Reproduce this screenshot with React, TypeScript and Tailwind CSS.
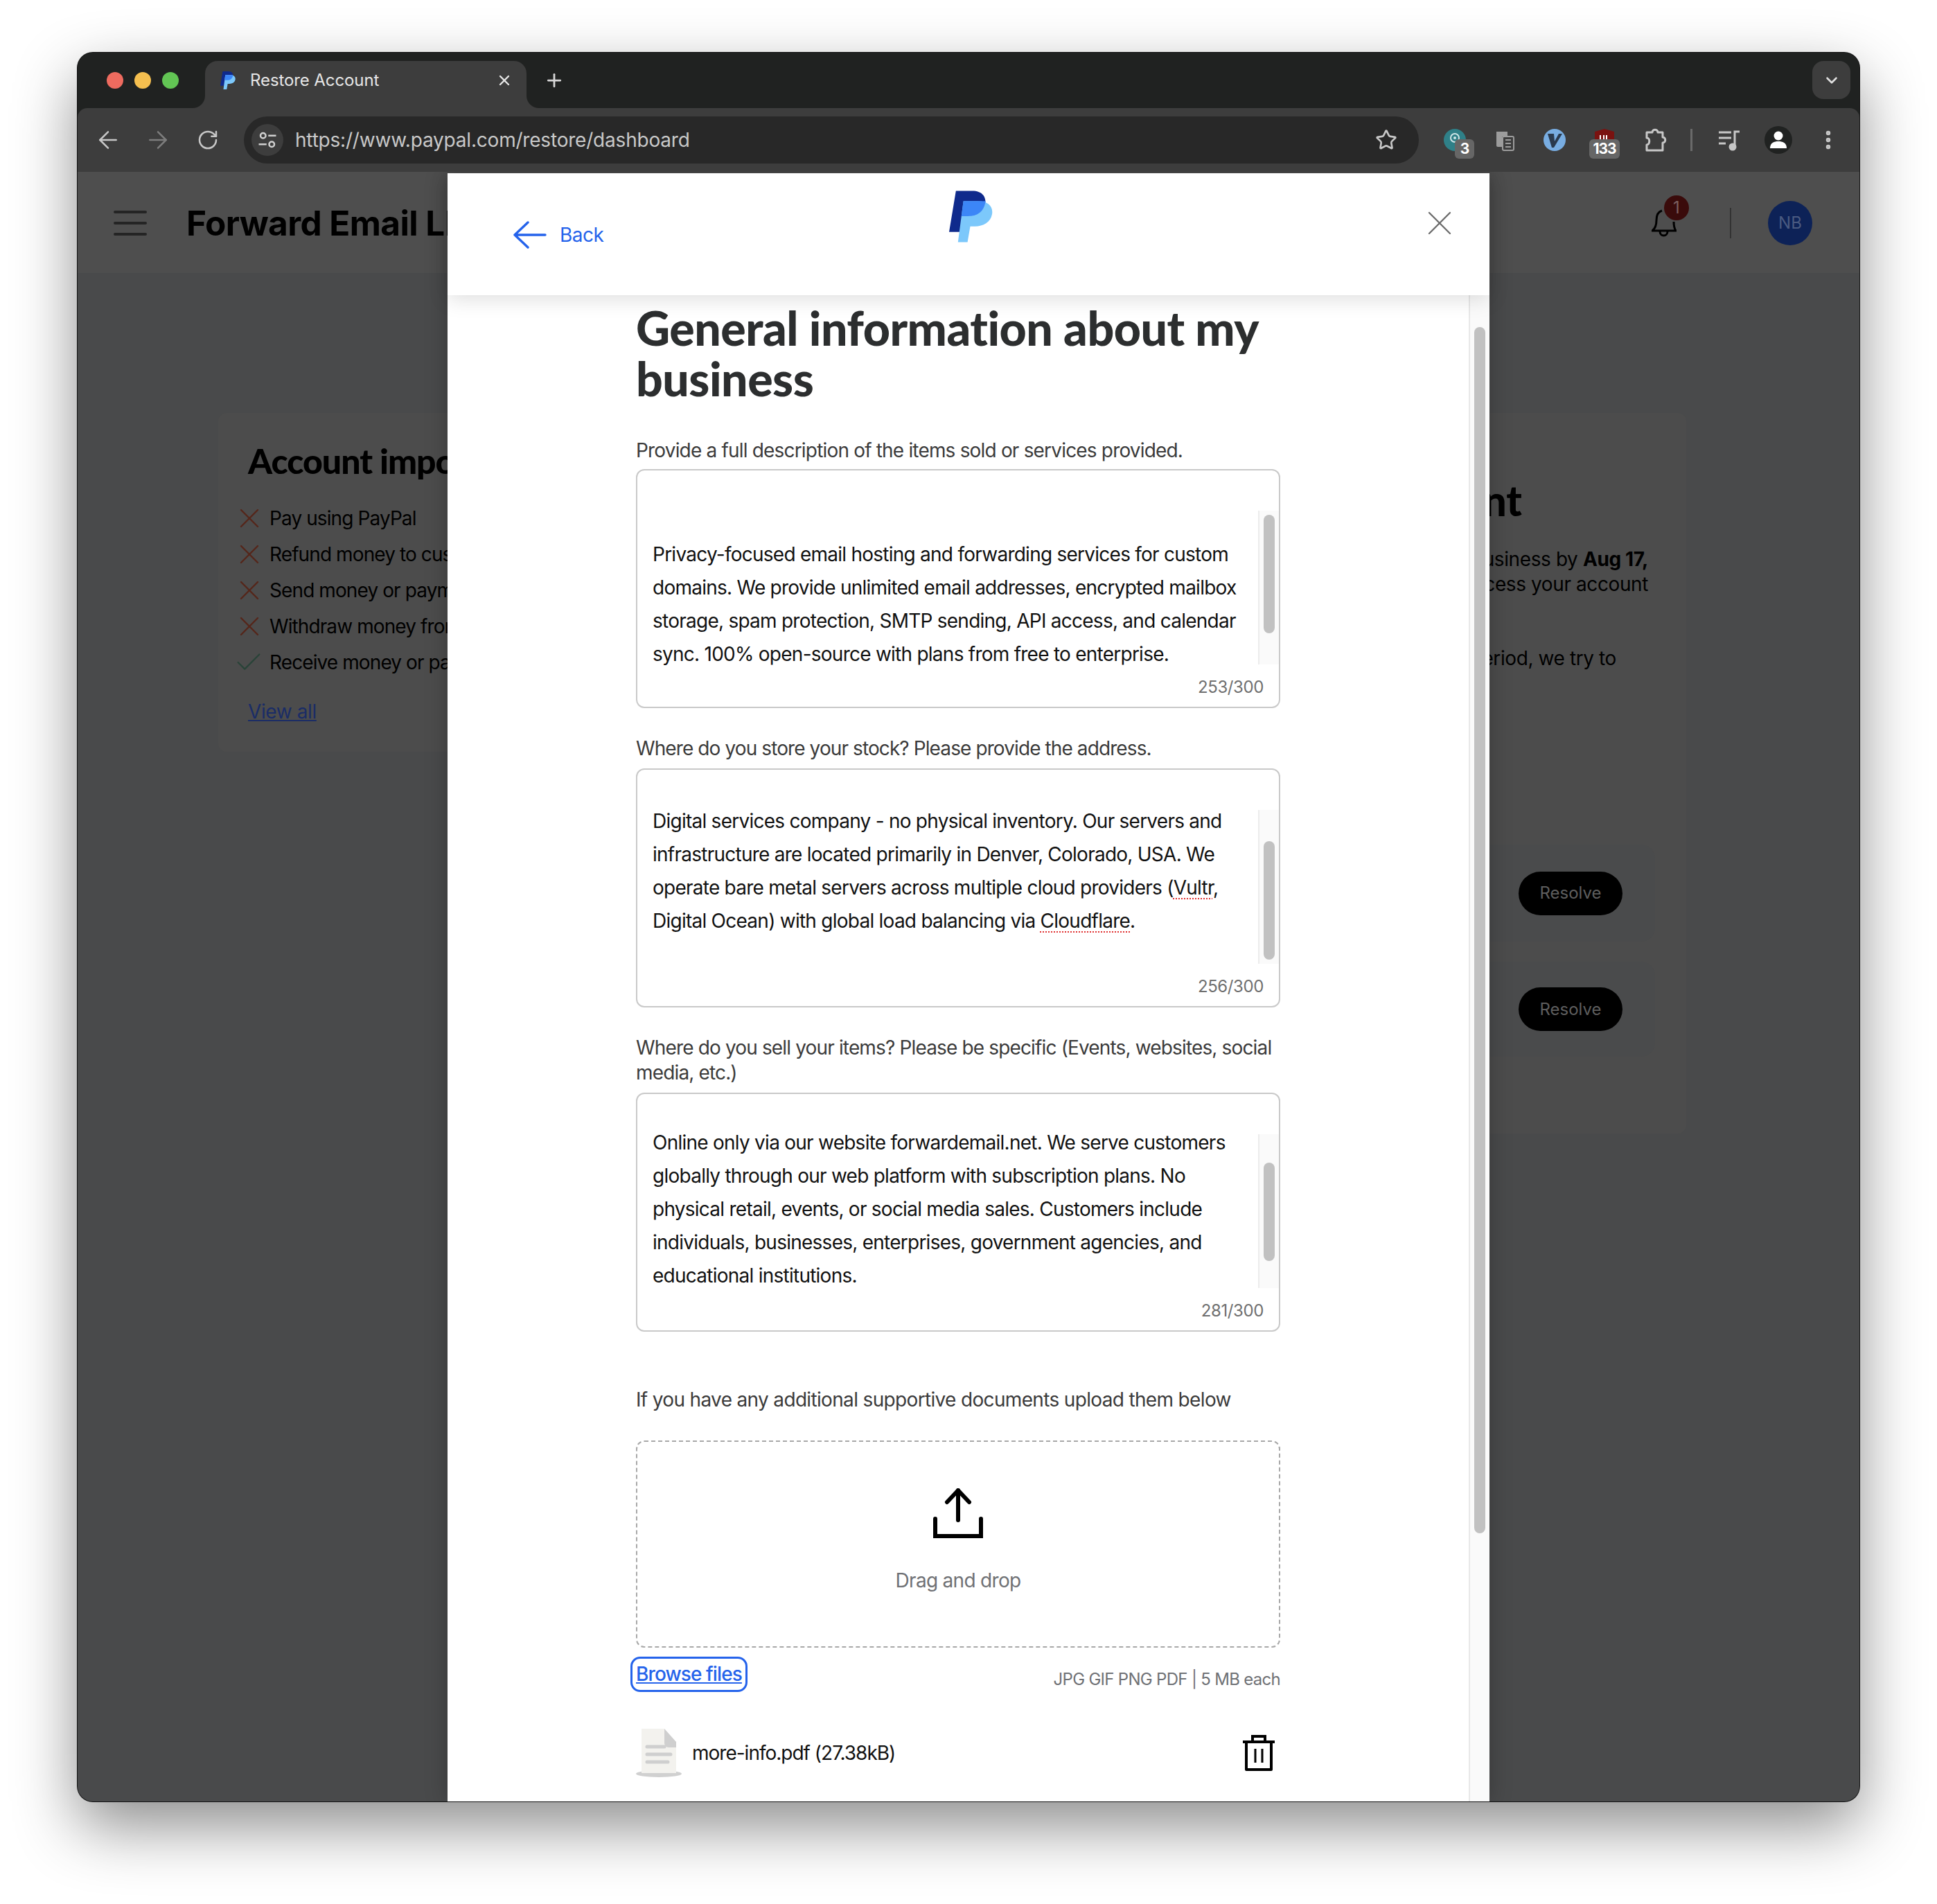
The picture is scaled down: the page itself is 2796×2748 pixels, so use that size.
import React from 'react';
import { ArrowLeft, ArrowRight, ChevronDown, Plus, RotateCw, Star, X, Check, EllipsisVertical } from 'lucide-react';

function PayPalMark({ className }: { className?: string }) {
  return (
    <svg viewBox="0 0 64 75" className={className}>
      <path d="M10 0H34C48 0 55 8 53 20C51 32 40 37 28 37H20L16 60H0Z" fill="#0f2a8c" />
      <path d="M21 15H42C56 15 65 22 63 34C61 46 50 52 38 52H31L27 75H13Z" fill="#7cc8fb" />
      <path d="M21 15H53.5C51 32 40 37 28 37H18Z" fill="#3c86f7" />
    </svg>
  );
}

function Shortcut({ className, children }: { className: string; children: React.ReactNode }) {
  return <div className={`flex items-center justify-center relative ${className}`}>{children}</div>;
}

function ExtBadge({ className, label }: { className: string; label: string }) {
  return (
    <span className={`absolute h-[28px] rounded-[6px] bg-[#666666] text-white text-[21px] tracking-[-1px] leading-[28px] font-bold text-center ${className}`}>
      {label}
    </span>
  );
}

function BrowserChrome() {
  return (
    <>
      {/* tab strip */}
      <div className="h-[80px] bg-[#202221] flex pt-[12px] shrink-0">
        <div className="w-[184px] flex items-center gap-[16px] pl-[42px] pb-[12px] shrink-0">
          <span className="w-[24px] h-[24px] rounded-full bg-[#ee6b5f]" />
          <span className="w-[24px] h-[24px] rounded-full bg-[#f5bf4f]" />
          <span className="w-[24px] h-[24px] rounded-full bg-[#62c554]" />
        </div>
        <div className="relative w-[464px] h-[68px] bg-[#3d3d3d] rounded-t-[18px] flex items-center pl-[22px] pr-[20px] pb-[12px] shrink-0">
          <span className="absolute -left-[18px] bottom-0 w-[18px] h-[18px] bg-[#3d3d3d]">
            <span className="block w-full h-full bg-[#202221] rounded-br-[18px]" />
          </span>
          <span className="absolute -right-[18px] bottom-0 w-[18px] h-[18px] bg-[#3d3d3d]">
            <span className="block w-full h-full bg-[#202221] rounded-bl-[18px]" />
          </span>
          <PayPalMark className="w-[22px] h-[26px]" />
          <span className="ml-[21px] text-[24px] tracking-[-0.1px] text-[#e6e6e6] flex-1">Restore Account</span>
          <X className="w-[24px] h-[24px] text-[#e6e6e6]" strokeWidth={2.4} />
        </div>
        <div className="w-[80px] flex items-center justify-center pb-[12px] shrink-0">
          <Plus className="w-[30px] h-[30px] text-[#d8d8d8]" strokeWidth={2.2} />
        </div>
        <div className="flex-1 flex justify-end pr-[13px]">
          <div className="w-[55px] h-[55px] rounded-[16px] bg-[#3d3d3d] flex items-center justify-center">
            <ChevronDown className="w-[26px] h-[26px] text-[#e0e0e0]" strokeWidth={2.4} />
          </div>
        </div>
      </div>

      {/* toolbar */}
      <div className="h-[92px] bg-[#3d3d3d] rounded-t-[14px] flex items-center shrink-0 text-[#c7c7c7]">
        <div className="w-[240px] flex items-center pl-[24px] gap-[32px] shrink-0">
          <ArrowLeft className="w-[40px] h-[40px]" strokeWidth={1.5} />
          <ArrowRight className="w-[40px] h-[40px] text-[#7d7d7d]" strokeWidth={1.5} />
          <RotateCw className="w-[32px] h-[32px] ml-[4px]" strokeWidth={1.9} />
        </div>
        <div className="w-[1696px] h-[68px] rounded-full bg-[#282828] flex items-center pl-[11px] pr-[31px] shrink-0">
          <div className="w-[46px] h-[46px] rounded-full bg-[#3d3d3d] flex items-center justify-center shrink-0">
            <svg viewBox="0 0 24 24" className="w-[30px] h-[30px]" fill="none" stroke="#d0d0d0" strokeWidth="2">
              <circle cx="7" cy="7" r="3" />
              <path d="M13 7H22M2 17H11" />
              <circle cx="17" cy="17" r="3" />
            </svg>
          </div>
          <span className="ml-[17px] text-[28px] tracking-[-0.2px] text-[#c8c8c8] flex-1">
            https://www.paypal.com/restore/dashboard
          </span>
          <Star className="w-[32px] h-[32px]" strokeWidth={2} />
        </div>
        <div className="flex items-center ml-[36px] gap-[40px] shrink-0">
          <Shortcut className="w-[32px] h-[32px]">
            <svg viewBox="0 0 32 32" className="w-[32px] h-[32px]">
              <circle cx="16" cy="16" r="16" fill="#2f8088" />
              <circle cx="16" cy="13" r="6" fill="none" stroke="#cfe6e8" strokeWidth="2" />
              <circle cx="16" cy="13" r="2" fill="#cfe6e8" />
            </svg>
            <ExtBadge className="left-[16px] top-[15px] w-[28px]" label="3" />
          </Shortcut>
          <Shortcut className="w-[32px] h-[32px]">
            <svg viewBox="0 0 32 32" className="w-[32px] h-[32px]" fill="none">
              <path d="M4 4h16v7H12v15H6a2 2 0 0 1-2-2Z" fill="#9c9c9c" />
              <rect x="13" y="11" width="16" height="20" rx="2" stroke="#9c9c9c" strokeWidth="2" />
              <path d="M17 16h8M17 21h8M17 26h8" stroke="#9c9c9c" strokeWidth="2" />
            </svg>
          </Shortcut>
          <Shortcut className="w-[32px] h-[32px]">
            <svg viewBox="0 0 32 32" className="w-[32px] h-[32px]">
              <circle cx="16" cy="16" r="16" fill="#78ade2" />
              <path d="M6 7H15L16 18L22 7H27L15 27H12Z" fill="#2a3a4e" />
            </svg>
          </Shortcut>
          <Shortcut className="w-[32px] h-[32px]">
            <svg viewBox="0 0 32 32" className="w-[32px] h-[32px]">
              <path d="M16 0L30 4V20C30 26 22 30 16 32C10 30 2 26 2 20V4Z" fill="#7a1210" />
              <path d="M10 9V15M15 9V15M19 9V15" stroke="#ffffff" strokeWidth="2" />
            </svg>
            <ExtBadge className="-left-[6px] top-[15px] w-[44px]" label="133" />
          </Shortcut>
          <svg viewBox="0 0 34 36" className="w-[34px] h-[36px]" fill="none" stroke="#c7c7c7" strokeWidth="3" strokeLinejoin="round">
            <path d="M5 7H13C13 2 21 2 21 7H28V14C33 14 33 22 28 22V33H5V25C10 24 10 15 5 15Z" />
          </svg>
        </div>
        <div className="w-[3px] h-[32px] bg-[#6a6a6a] ml-[34px] shrink-0" />
        <svg viewBox="0 0 32 32" className="w-[32px] h-[32px] ml-[37px] shrink-0" fill="none" stroke="#c7c7c7" strokeWidth="3">
          <path d="M1 5H19M1 13H19M1 21H11M24 25V4H31" />
          <circle cx="21" cy="26" r="4" fill="#c7c7c7" />
        </svg>
        <div className="w-[40px] h-[40px] rounded-full bg-[#202221] ml-[35px] flex items-center justify-center overflow-hidden shrink-0">
          <svg viewBox="0 0 40 40" className="w-[40px] h-[40px]" fill="#ffffff">
            <circle cx="20" cy="14" r="6.5" />
            <path d="M8 32C8 24 14 22 20 22C26 22 32 24 32 32Z" />
          </svg>
        </div>
        <EllipsisVertical className="w-[34px] h-[34px] ml-[35px] shrink-0" strokeWidth={2.6} />
      </div>
    </>
  );
}

const accountItems = [
  { text: 'Pay using PayPal', ok: false },
  { text: 'Refund money to customers', ok: false },
  { text: 'Send money or payments', ok: false },
  { text: 'Withdraw money from your balance', ok: false },
  { text: 'Receive money or payments', ok: true },
];

function DimmedPage() {
  return (
    <div className="h-full flex flex-col text-black">
      <div className="h-[146px] bg-[#4e4e4e] flex items-center pt-[2px] shrink-0">
        <div className="ml-[52px] w-[48px] flex flex-col gap-[12px]">
          <span className="h-[4px] bg-[#242424] rounded-full" />
          <span className="h-[4px] bg-[#242424] rounded-full" />
          <span className="h-[4px] bg-[#242424] rounded-full" />
        </div>
        <h2 className="ml-[57px] mt-[1px] text-[49.5px] font-bold tracking-[-0.6px] whitespace-nowrap">Forward Email LLC</h2>
        <div className="ml-auto flex items-center">
          <div className="relative w-[36px] h-[40px]">
            <svg viewBox="0 0 36 40" className="w-[36px] h-[40px]" fill="none" stroke="#000" strokeWidth="3">
              <path d="M15 2C8 4 7 10 7 16C7 24 5 28 1 31H35C33 28 32 24 32 18" />
              <path d="M12 32C12 40 23 40 23 32" />
            </svg>
            <span className="absolute -top-[20px] left-[18px] w-[36px] h-[36px] rounded-full bg-[#3a0b0b] text-[#7c6060] text-[24px] leading-[36px] text-center">
              1
            </span>
          </div>
          <span className="w-[2px] h-[44px] bg-[#333333] ml-[77px]" />
          <div className="w-[64px] h-[64px] rounded-full bg-[#0d2257] ml-[53px] mr-[68px] flex items-center justify-center text-[24px] text-[#4a5a80]">
            NB
          </div>
        </div>
      </div>

      <div className="flex-1 bg-[#494a4b] flex pt-[202px] pl-[203px]">
        {/* left card */}
        <div className="w-[900px] h-[489px] bg-[#4c4c4c] rounded-[12px] pl-[43px] pt-[37px] shrink-0">
          <h3 className="[font-family:Lato,sans-serif] font-black text-[50px] tracking-[-1px] leading-[64px] whitespace-nowrap">Account important</h3>
          <ul className="mt-[33px] -ml-[22px] flex flex-col gap-[16px]">
            {accountItems.map(item => (
              <li key={item.text} className="flex items-center h-[36px] text-[28px] tracking-[-0.9px] whitespace-nowrap">
                {item.ok ? (
                  <Check className="w-[46px] h-[46px] text-[#294338] shrink-0" strokeWidth={1.2} />
                ) : (
                  <X className="w-[48px] h-[48px] text-[#55261a] shrink-0" strokeWidth={1.2} />
                )}
                <span className={item.ok ? 'ml-[7px]' : 'ml-[5px]'}>{item.text}</span>
              </li>
            ))}
          </ul>
          <a className="block mt-[32px] text-[28px] tracking-[-0.4px] text-[#1a2c66] underline">View all</a>
        </div>

        {/* right card */}
        <div className="ml-[172px] w-[1047px] h-[1040px] bg-[#4c4c4c] rounded-[12px] flex flex-col items-end pt-[91px] shrink-0">
          <h3 className="mr-[237px] [font-family:Lato,sans-serif] font-black text-[60px] leading-[70px] whitespace-nowrap">Resolve account</h3>
          <p className="mr-[55px] mt-[32px] text-[28px] leading-[36px] tracking-[-0.4px] whitespace-nowrap">
            Please resolve issues with your business by <b>Aug 17,</b>
          </p>
          <p className="mr-[55px] text-[28px] leading-[36px] tracking-[-0.4px] whitespace-nowrap">2025 or you may no longer be able to access your account</p>
          <p className="mr-[101px] mt-[71px] text-[28px] leading-[36px] tracking-[-0.4px] whitespace-nowrap">During this limitation period, we try to</p>
          <div className="mt-[251px] mr-[45px] w-[900px] h-[140px] rounded-[20px] bg-[#4a4b4c] flex items-center justify-end pr-[47px]">
            <span className="w-[150px] h-[63px] rounded-full bg-black text-[#5e5e5e] text-[24px] flex items-center justify-center">Resolve</span>
          </div>
          <div className="mt-[29px] mr-[45px] w-[900px] h-[137px] rounded-[20px] bg-[#4a4b4c] flex items-center justify-end pr-[47px]">
            <span className="w-[150px] h-[63px] rounded-full bg-black text-[#5e5e5e] text-[24px] flex items-center justify-center">Resolve</span>
          </div>
        </div>
      </div>
    </div>
  );
}

function TextBox({
  lines,
  count,
  textTop,
  thumb,
}: {
  lines: React.ReactNode[];
  count: string;
  textTop: string;
  thumb: string;
}) {
  return (
    <div className="h-[345px] w-[930px] border-2 border-[#c9c9c9] rounded-[12px] flex flex-col pt-[58px]">
      <div className="h-[222px] flex">
        <div className={`flex-1 pl-[22px] ${textTop}`}>
          {lines.map((line, i) => (
            <div key={i} className="text-[28px] leading-[48px] tracking-[-0.75px] text-[#111111] whitespace-nowrap">
              {line}
            </div>
          ))}
        </div>
        <div className="w-[30px] h-full bg-[#fafafa] border-l-2 border-[#ececec] pl-[6px]">
          <div className={`w-[16px] rounded-full bg-[#c1c1c1] ${thumb}`} />
        </div>
      </div>
      <div className="mt-[21px] pr-[22px] text-right text-[24px] leading-[24px] tracking-[-0.4px] text-[#6f6f6f]">{count}</div>
    </div>
  );
}

function Misspelled({ children }: { children: React.ReactNode }) {
  return <span className="underline decoration-dotted decoration-[#e03131] decoration-2 underline-offset-[5px]">{children}</span>;
}

function RestoreModal() {
  return (
    <div className="absolute left-[534px] top-[2px] bottom-0 w-[1504px] bg-white flex flex-col shadow-[0_0_30px_rgba(0,0,0,0.25)]">
      <div className="relative z-10 h-[176px] bg-white shadow-[0_6px_28px_rgba(0,0,0,0.13)] flex items-start shrink-0">
        <div className="flex items-center ml-[97px] mt-[68px] text-[#2563eb]">
          <svg viewBox="0 0 48 40" className="w-[48px] h-[40px] -ml-[2px]" fill="none" stroke="#2563eb" strokeWidth="3.4" strokeLinecap="round" strokeLinejoin="round">
            <path d="M21 2L2 20L21 38M2 20H46" />
          </svg>
          <span className="ml-[19px] text-[28px] tracking-[-0.5px]">Back</span>
        </div>
        <PayPalMark className="w-[63px] h-[75px] ml-[499px] mt-[25px]" />
        <X className="w-[60px] h-[60px] text-[#6b6b6b] ml-auto mr-[42px] mt-[42px]" strokeWidth={0.95} />
      </div>

      <div className="flex-1 flex min-h-0">
        <div className="flex-1 pl-[272px] pt-[10px] overflow-hidden">
          <h1 className="w-[930px] [font-family:Lato,sans-serif] font-black text-[68px] leading-[73px] tracking-[-0.5px] text-[#2c2e2f]">
            General information about my business
          </h1>

          <p className="mt-[50px] mb-[9px] text-[28px] leading-[36px] tracking-[-0.82px] text-[#3b3b3b]">
            Provide a full description of the items sold or services provided.
          </p>
          <TextBox
            count="253/300"
            textTop="mt-[39px]"
            thumb="mt-[6px] h-[171px]"
            lines={[
              'Privacy-focused email hosting and forwarding services for custom',
              'domains. We provide unlimited email addresses, encrypted mailbox',
              'storage, spam protection, SMTP sending, API access, and calendar',
              'sync. 100% open-source with plans from free to enterprise.',
            ]}
          />

          <p className="mt-[40px] mb-[11px] text-[28px] leading-[36px] tracking-[-0.9px] text-[#3b3b3b]">
            Where do you store your stock? Please provide the address.
          </p>
          <TextBox
            count="256/300"
            textTop="-mt-[8px]"
            thumb="mt-[45px] h-[171px]"
            lines={[
              'Digital services company - no physical inventory. Our servers and',
              'infrastructure are located primarily in Denver, Colorado, USA. We',
              <>operate bare metal servers across multiple cloud providers (<Misspelled>Vultr</Misspelled>,</>,
              <>Digital Ocean) with global load balancing via <Misspelled>Cloudflare</Misspelled>.</>,
            ]}
          />

          <p className="mt-[40px] mb-[11px] w-[930px] text-[28px] leading-[36px] tracking-[-0.85px] text-[#3b3b3b]">
            Where do you sell your items? Please be specific (Events, websites, social media, etc.)
          </p>
          <TextBox
            count="281/300"
            textTop="-mt-[12px]"
            thumb="mt-[41px] h-[142px]"
            lines={[
              'Online only via our website forwardemail.net. We serve customers',
              'globally through our web platform with subscription plans. No',
              'physical retail, events, or social media sales. Customers include',
              'individuals, businesses, enterprises, government agencies, and',
              'educational institutions.',
            ]}
          />

          <p className="mt-[80px] mb-[41px] text-[28px] leading-[36px] tracking-[-0.66px] text-[#3b3b3b]">
            If you have any additional supportive documents upload them below
          </p>

          <div className="w-[930px] h-[299px] border-2 border-dashed border-[#a8a8a8] rounded-[12px] flex flex-col items-center pt-[67px]">
            <svg viewBox="0 0 72 72" className="w-[72px] h-[72px]" fill="none" stroke="#000" strokeWidth="6">
              <path d="M36 3V46" strokeLinecap="round" />
              <path d="M20 20L36 3L52 20" strokeLinecap="round" strokeLinejoin="round" />
              <path d="M3 44V69H69V44" strokeLinecap="round" />
            </svg>
            <span className="mt-[43px] text-[28px] leading-[36px] tracking-[-0.7px] text-[#6f7175]">Drag and drop</span>
          </div>

          <div className="w-[930px] flex justify-between items-end mt-[13px]">
            <a className="-ml-[8px] border-[3px] border-[#2563eb] rounded-[14px] px-[5px] text-[28px] leading-[45px] font-medium tracking-[-0.9px] text-[#2563eb] underline">
              Browse files
            </a>
            <span className="text-[24px] leading-[30px] mb-[3px] text-[#6f7175] tracking-[-0.7px]">JPG GIF PNG PDF | 5 MB each</span>
          </div>

          <div className="w-[930px] flex items-center mt-[53px]">
            <svg viewBox="0 0 66 70" className="w-[66px] h-[70px] shrink-0">
              <ellipse cx="33" cy="65" rx="33" ry="5" fill="#d0d0d0" />
              <path d="M8 0H41L58 27V64H8Z" fill="#f3f2ee" />
              <path d="M41 0L58 19V27H47C43 27 41 24 41 20Z" fill="#cfcfcf" />
              <path d="M16 26H41M16 37H50M16 48H46" stroke="#cfcfcf" strokeWidth="5" strokeLinecap="round" />
            </svg>
            <span className="ml-[15px] text-[28px] tracking-[-1px] text-[#111111]">more-info.pdf (27.38kB)</span>
            <svg viewBox="0 0 48 52" className="w-[48px] h-[52px] ml-auto mr-[7px]" fill="none" stroke="#000" strokeWidth="4">
              <path d="M1 10H47M15 10V2H33V10" />
              <path d="M6 10V50H42V10" strokeLinejoin="round" />
              <path d="M19 20V40M29 20V40" strokeWidth="3" />
            </svg>
          </div>
        </div>

        {/* modal scrollbar */}
        <div className="w-[30px] bg-[#fafafa] border-l-2 border-[#e8e8e8] pl-[6px] pt-[46px] shrink-0">
          <div className="w-[16px] h-[1741px] rounded-full bg-[#c1c1c1]" />
        </div>
      </div>
    </div>
  );
}

export default function App() {
  return (
    <div className="w-[2796px] h-[2748px] bg-white pt-[76px] pl-[112px] [font-family:Inter,sans-serif] overflow-hidden">
      <div className="w-[2572px] h-[2524px] rounded-[22px] overflow-hidden flex flex-col shadow-[0_0_0_1px_#111111,0_36px_90px_rgba(0,0,0,0.45)] bg-[#202221]">
        <BrowserChrome />
        <div className="relative flex-1 min-h-0 overflow-hidden">
          <DimmedPage />
          <RestoreModal />
        </div>
      </div>
    </div>
  );
}
